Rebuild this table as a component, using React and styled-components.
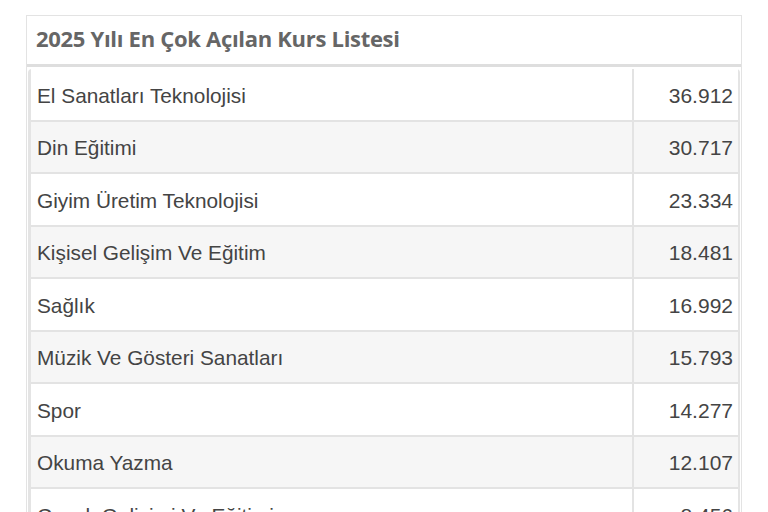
import React from "react";
import styled, { createGlobalStyle } from "styled-components";

const Global = createGlobalStyle`
  html, body { margin: 0; padding: 0; background: #fff; }
  body { font-family: "Liberation Sans", Arial, sans-serif; }
`;

const Panel = styled.section`
  margin: 15px 0 0 26px;
  width: 714px;
  border: 1px solid #e3e3e3;
  border-bottom: none;
  background: #fff;
`;

const Header = styled.h2`
  margin: 0;
  height: 48px;
  line-height: 44px;
  padding: 0 0 0 9px;
  font-family: "Open Sans", sans-serif;
  font-weight: 700;
  font-size: 22px;
  letter-spacing: -0.3px;
  color: #666;
  border-bottom: 3px solid #dedede;
`;

const Table = styled.div`
  margin: 2px 1px 0 1px;
  border-left: 3px solid #e4e4e4;
  border-right: 2px solid #e4e4e4;
  border-top-left-radius: 4px;
  border-top-right-radius: 4px;
`;

const Row = styled.div`
  display: grid;
  grid-template-columns: 1fr 104px;
  height: 50.5px;
  border-bottom: 2px solid #e3e3e3;
  background: ${(p) => (p.$alt ? "#f6f6f6" : "#fff")};
`;

const Name = styled.div`
  display: flex;
  align-items: center;
  padding: 3px 0 0 6px;
  font-size: 20.8px;
  color: #444;
  border-right: 2px solid #e3e3e3;
`;

const Value = styled.div`
  display: flex;
  align-items: center;
  justify-content: flex-end;
  padding: 3px 5px 0 0;
  font-size: 21px;
  color: #444;
`;

const data = [
  ["El Sanatları Teknolojisi", "36.912"],
  ["Din Eğitimi", "30.717"],
  ["Giyim Üretim Teknolojisi", "23.334"],
  ["Kişisel Gelişim Ve Eğitim", "18.481"],
  ["Sağlık", "16.992"],
  ["Müzik Ve Gösteri Sanatları", "15.793"],
  ["Spor", "14.277"],
  ["Okuma Yazma", "12.107"],
  ["Çocuk Gelişimi Ve Eğitimi", "8.456"],
];

export default function App() {
  return (
    <>
      <Global />
      <Panel>
        <Header>2025 Yılı En Çok Açılan Kurs Listesi</Header>
        <Table>
          {data.map(([n, v], i) => (
            <Row key={n} $alt={i % 2 === 1}>
              <Name>{n}</Name>
              <Value>{v}</Value>
            </Row>
          ))}
        </Table>
      </Panel>
    </>
  );
}
